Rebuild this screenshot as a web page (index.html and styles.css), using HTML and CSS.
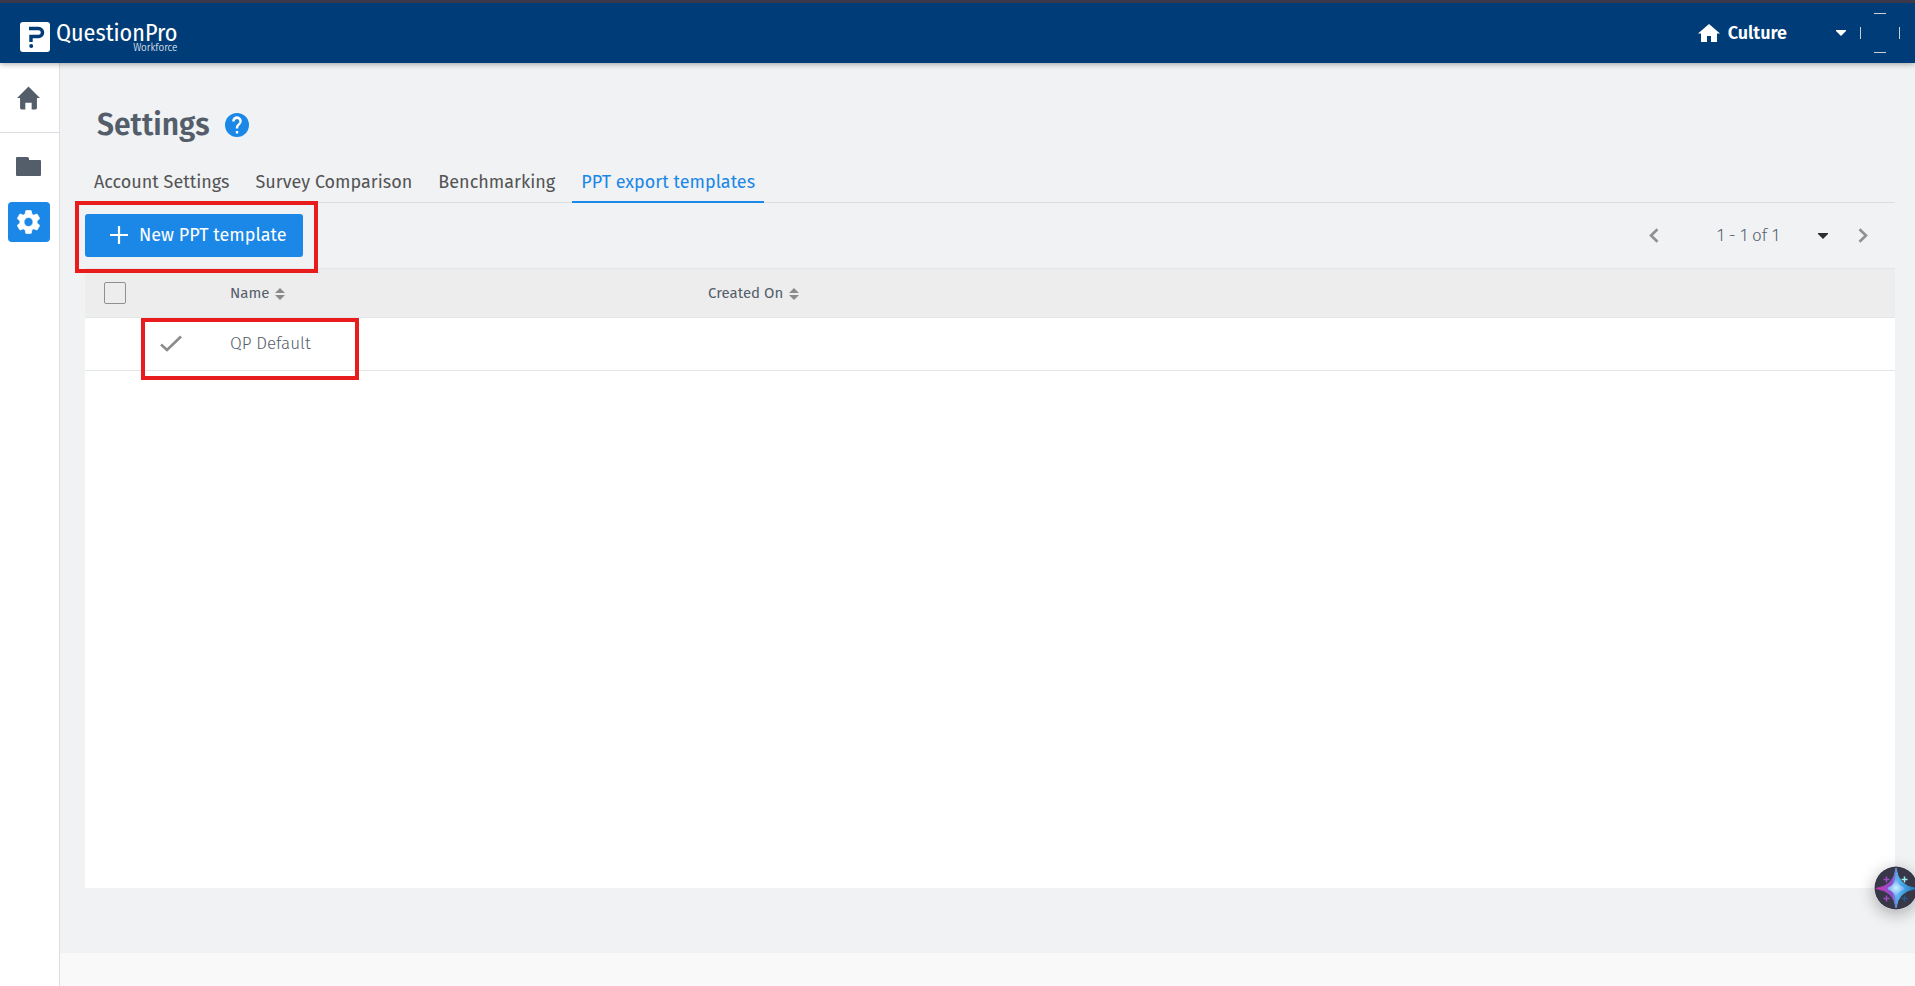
FILE: index.html
```html
<!DOCTYPE html>
<html lang="en">
<head>
<meta charset="utf-8">
<title>Settings - QuestionPro Workforce</title>
<link rel="stylesheet" href="styles.css">
</head>
<body>
<header class="topbar">
  <a class="brand" href="#" aria-label="QuestionPro Workforce">
    <svg class="brand-mark" viewBox="0 0 30 30" aria-hidden="true">
      <rect width="30" height="30" rx="3" fill="#fff"/>
      <path d="M9 6.500h9.500a3.800 3.800 0 0 1 0 8H11V20" fill="none" stroke="#003c78" stroke-width="3.400"/>
      <circle cx="11.200" cy="24" r="2" fill="#003c78"/>
    </svg>
    <span class="brand-text">
      <span class="brand-name">QuestionPro</span>
      <span class="brand-sub">Workforce</span>
    </span>
  </a>
  <nav class="account">
    <a class="product" href="#">
      <svg class="product-icon" viewBox="0 0 22 18" aria-hidden="true"><path d="M11 0L0 9.500h3V18h6v-6h4v6h6V9.500h3z" fill="#fff"/></svg>
      Culture
    </a>
    <button class="account-menu" type="button" aria-label="Account menu">
      <svg class="caret" viewBox="0 0 10 6" aria-hidden="true"><path d="M0 0h10v1L5 6 0 1z" fill="currentColor"/></svg>
      <svg class="avatar" viewBox="0 0 40 40" aria-hidden="true"><path d="M14 .5h12M14 39.500h12M.5 14v12M39.500 14v12" stroke="#c9d0d0" stroke-width="1"/></svg>
    </button>
  </nav>
</header>
<div class="shell">
  <nav class="sidebar" aria-label="Main">
    <a class="side-home" href="#" aria-label="Home">
      <svg class="side-icon" viewBox="0 0 24 24" aria-hidden="true"><path d="M12 0L0 12h3.200v10.500q0 1.500 1.500 1.500h4v-7h6.600v7h4q1.500 0 1.500-1.500V12H24z" fill="currentColor"/></svg>
    </a>
    <a class="side-link" href="#" aria-label="Folders">
      <svg class="side-folder" viewBox="0 0 25 19" aria-hidden="true"><path d="M1 0h10.500l1.500 1v2h11q1 0 1 1v14q0 1-1 1H1q-1 0-1-1V1q0-1 1-1z" fill="currentColor"/></svg>
    </a>
    <a class="side-link side-active" href="#" aria-label="Settings" aria-current="page">
      <svg class="side-icon" viewBox="2 2 20 20" aria-hidden="true"><path d="M19.430 12.980c.04-.32.07-.64.07-.98s-.03-.66-.07-.98l2.110-1.650c.19-.15.24-.42.12-.64l-2-3.460c-.12-.22-.39-.3-.61-.22l-2.490 1c-.52-.4-1.080-.73-1.690-.98l-.38-2.650A.488.488 0 0 0 14 2h-4c-.25 0-.46.18-.49.42l-.38 2.650c-.61.25-1.170.59-1.690.98l-2.490-1c-.23-.09-.49 0-.61.22l-2 3.460c-.13.22-.07.49.12.64l2.110 1.650c-.04.32-.07.65-.07.98s.03.66.07.98l-2.110 1.650c-.19.15-.24.42-.12.64l2 3.460c.12.22.39.3.61.22l2.490-1c.52.4 1.080.73 1.690.98l.38 2.650c.03.24.24.42.49.42h4c.25 0 .46-.18.49-.42l.38-2.650c.61-.25 1.170-.59 1.690-.98l2.490 1c.23.09.49 0 .61-.22l2-3.460c.12-.22.07-.49-.12-.64zM12 15.900a3.900 3.900 0 1 1 0-7.800 3.900 3.900 0 0 1 0 7.800z" fill="currentColor" stroke="currentColor" stroke-width=".6"/></svg>
    </a>
  </nav>
  <div class="content">
    <main class="page">
      <div class="heading">
        <h1 class="title">Settings</h1>
        <a class="help" href="#" aria-label="Help">
          <svg class="help-icon" viewBox="2 2 20 20" aria-hidden="true"><circle cx="12" cy="12" r="10" fill="#1b87e6"/><path d="M13 19h-2v-2h2zm2.070-7.750l-.9.920C13.450 12.900 13 13.500 13 15h-2v-.5c0-1.100.45-2.100 1.170-2.830l1.240-1.260A2 2 0 1 0 10 9H8a4 4 0 1 1 7.070 2.250z" fill="#fff"/></svg>
        </a>
      </div>
      <nav class="tabs" aria-label="Settings sections">
        <a class="tab" href="#">Account Settings</a>
        <a class="tab" href="#">Survey Comparison</a>
        <a class="tab" href="#">Benchmarking</a>
        <a class="tab tab-active" href="#" aria-current="page">PPT export templates</a>
      </nav>
      <div class="toolbar">
        <button class="new-button" type="button">
          <svg class="plus" viewBox="0 0 18 18" aria-hidden="true"><path d="M9 0v18M0 9h18" stroke="#fff" stroke-width="2.200"/></svg>
          New PPT template
        </button>
        <span class="mark mark-button"></span>
        <div class="pager">
          <button class="pager-button" type="button" aria-label="Previous page"><svg class="chevron" viewBox="0 0 10 15" aria-hidden="true"><path d="M8.500 1.200L2 7.500l6.500 6.300" fill="none" stroke="#8e9092" stroke-width="2.600"/></svg></button>
          <button class="pager-range" type="button">1 - 1 of 1 <svg class="caret" viewBox="0 0 10 6" aria-hidden="true"><path d="M0 0h10v1L5 6 0 1z" fill="currentColor"/></svg></button>
          <button class="pager-button" type="button" aria-label="Next page"><svg class="chevron" viewBox="0 0 10 15" aria-hidden="true"><path d="M1.500 1.200L8 7.500l-6.500 6.300" fill="none" stroke="#8e9092" stroke-width="2.600"/></svg></button>
        </div>
      </div>
      <section class="card">
        <table class="templates">
          <thead>
            <tr>
              <th class="col-check"><input class="checkbox" type="checkbox" aria-label="Select all"></th>
              <th class="col-state"></th>
              <th class="col-name">Name <svg class="sort" viewBox="0 0 10 12" aria-hidden="true"><path d="M5 0l5 5H0zM5 12L0 7h10z" fill="#8b8b8b"/></svg></th>
              <th>Created On <svg class="sort" viewBox="0 0 10 12" aria-hidden="true"><path d="M5 0l5 5H0zM5 12L0 7h10z" fill="#8b8b8b"/></svg></th>
            </tr>
          </thead>
          <tbody>
            <tr>
              <td></td>
              <td class="col-state"><svg class="tick" viewBox="0 0 22 17" aria-label="Default"><path d="M1 9.500l6 5.500L21 1.500" fill="none" stroke="#8b8b8b" stroke-width="2.600"/></svg></td>
              <td class="col-name">QP Default</td>
              <td></td>
            </tr>
          </tbody>
        </table>
        <span class="mark mark-row"></span>
      </section>
    </main>
    <footer class="footer"></footer>
  </div>
</div>
<button class="assistant" type="button" aria-label="AI assistant">
  <svg class="assistant-icon" viewBox="0 0 44 44" aria-hidden="true">
    <defs>
      <linearGradient id="star" x1="0" x2="1" y1="0" y2="0"><stop offset="0" stop-color="#cf36b5"/><stop offset=".4" stop-color="#8a50cc"/><stop offset=".55" stop-color="#52b9ee"/><stop offset="1" stop-color="#2075c0"/></linearGradient>
      <radialGradient id="core"><stop offset="0" stop-color="#c6f5ff"/><stop offset="1" stop-color="#78a8f4"/></radialGradient>
    </defs>
    <circle cx="22" cy="22" r="21.500" fill="#373748"/>
    <path d="M22 2Q24 20 42 22.500Q24 25 22 42Q20 25 2 22.500Q20 20 22 2z" fill="url(#star)" stroke="url(#star)" stroke-width="1"/>
    <path d="M22 14Q24 21 30 22.500Q24 24 22 30Q20 24 14 22.500Q20 21 22 14z" fill="url(#core)" stroke="url(#core)" stroke-width="2"/>
    <path d="M12.500 10.500v6M9.500 13.500h6M12.500 29.500v6M9.500 32.500h6" stroke="#a04cc4" stroke-width="1.500"/>
    <path d="M30.500 10.500v6M27.500 13.500h6" stroke="#9cecf0" stroke-width="1.500"/>
    <path d="M30.500 29.500v6M27.500 32.500h6" stroke="#275a8b" stroke-width="1.500"/>
  </svg>
</button>
</body>
</html>
```
FILE: styles.css
```css
* {
  box-sizing: border-box;
}

body {
  margin: 0;
  min-height: 100vh;
  display: flex;
  flex-direction: column;
  overflow-x: hidden;
  background: #f9f9f9;
  color: #545e6b;
  font-family: "Fira Sans", "Noto Sans", "Open Sans", sans-serif;
  font-size: 16px;
}

a {
  color: inherit;
  text-decoration: none;
}

button {
  padding: 0;
  border: 0;
  background: none;
  color: inherit;
  font: inherit;
  cursor: pointer;
}

svg {
  display: block;
}

.topbar {
  position: relative;
  z-index: 2;
  display: flex;
  justify-content: space-between;
  height: 63px;
  padding: 0 15px 0 20px;
  border-top: 3px solid #3d394b;
  background: #003c78;
  color: #fff;
  box-shadow: 0 1px 6px rgba(0, 0, 0, 0.35);
}

.brand {
  display: flex;
  align-items: flex-start;
  gap: 6px;
  padding-top: 19px;
}

.brand-mark {
  width: 30px;
  height: 30px;
}

.brand-text {
  display: flex;
  flex-direction: column;
  align-items: flex-end;
  font-family: "Fira Sans Condensed", "Fira Sans", Roboto, sans-serif;
}

.brand-name {
  font-size: 24px;
  font-weight: 400;
  line-height: 22px;
}

.brand-sub {
  font-size: 11px;
  line-height: 8px;
  font-weight: 300;
}

.account {
  display: flex;
  align-items: center;
  gap: 49px;
}

.product {
  display: flex;
  align-items: center;
  gap: 8px;
  font-size: 18px;
  font-weight: 600;
}

.product-icon {
  width: 22px;
  height: 18px;
}

.account-menu {
  display: flex;
  align-items: center;
  gap: 14px;
}

.caret {
  width: 10px;
  height: 6px;
}

.avatar {
  width: 40px;
  height: 40px;
}

.shell {
  flex: 1;
  display: flex;
}

.sidebar {
  display: flex;
  flex-direction: column;
  align-items: center;
  gap: 4px;
  width: 60px;
  border-right: 1px solid #dcdee1;
  background: #fff;
  color: #545e6b;
}

.side-home {
  display: flex;
  align-items: center;
  justify-content: center;
  align-self: stretch;
  height: 70px;
  padding-right: 2px;
  margin-bottom: 9px;
  border-bottom: 1px solid #dcdee1;
}

.side-link {
  display: flex;
  align-items: center;
  justify-content: center;
  width: 42px;
  height: 40px;
  margin: 0 2px 12px 0;
  border-radius: 4px;
}

.side-active {
  background: #1b87e6;
  color: #fff;
}

.side-icon {
  width: 23px;
  height: 24px;
}

.side-folder {
  width: 25px;
  height: 19px;
}

.content {
  flex: 1;
  display: flex;
  flex-direction: column;
  min-width: 0;
}

.page {
  flex: 1;
  display: flex;
  flex-direction: column;
  padding: 40px 20px 65px 25px;
  background: #f0f2f4;
}

.heading {
  display: flex;
  align-items: center;
  gap: 15px;
  height: 44px;
  padding-left: 12px;
}

.title {
  margin: 0;
  font-size: 30px;
  font-weight: 600;
}

.help-icon {
  width: 24px;
  height: 24px;
}

.tabs {
  display: flex;
  gap: 8px;
  height: 56px;
  padding-top: 18px;
  border-bottom: 1px solid #dcdee1;
}

.tab {
  height: 38px;
  padding: 0 9px;
  color: #545454;
  font-size: 18px;
  line-height: 34px;
}

.tab-active {
  border-bottom: 2px solid #1b87e6;
  color: #1b87e6;
}

.toolbar {
  position: relative;
  display: flex;
  align-items: flex-start;
  justify-content: space-between;
  height: 65px;
  padding-top: 11px;
}

.new-button {
  display: flex;
  align-items: center;
  gap: 11px;
  height: 43px;
  padding: 0 16px 2px 25px;
  border-radius: 3px;
  background: #1b87e6;
  color: #fff;
  font-size: 18px;
  font-weight: 400;
}

.plus {
  width: 18px;
  height: 18px;
}

.mark {
  position: absolute;
  border: 4px solid #e81c1c;
  pointer-events: none;
}

.mark-button {
  top: -2px;
  left: -10px;
  width: 243px;
  height: 72px;
  z-index: 1;
}

.mark-row {
  top: 50px;
  left: 56px;
  width: 218px;
  height: 62px;
}

.pager {
  display: flex;
  align-items: center;
  height: 43px;
  padding-right: 27px;
}

.pager-range {
  display: flex;
  align-items: center;
  gap: 39px;
  margin: 0 30px 0 58px;
  font-size: 17px;
  font-weight: 300;
}

.pager-range .caret {
  color: #2b2d2f;
}

.chevron {
  width: 10px;
  height: 15px;
}

.card {
  position: relative;
  flex: 1;
  background: #fff;
}

.templates {
  width: 100%;
  border-collapse: collapse;
  table-layout: fixed;
}

.templates th {
  height: 49px;
  padding: 0;
  border-top: 1px solid #e3e5e8;
  border-bottom: 1px solid #e3e5e8;
  background: #ededed;
  font-size: 15px;
  font-weight: 400;
  text-align: left;
}

.templates td {
  height: 53px;
  padding: 0 0 2px;
  border-bottom: 1px solid #e3e5e8;
  font-size: 17px;
  font-weight: 300;
}

.col-check {
  width: 75px;
}

.col-state {
  width: 70px;
}

.col-name {
  width: 478px;
}

.checkbox {
  display: block;
  appearance: none;
  width: 22px;
  height: 22px;
  margin: 0 0 0 19px;
  border: 1px solid #8e9092;
  border-radius: 2px;
}

.sort {
  display: inline-block;
  width: 10px;
  height: 12px;
  margin-left: 2px;
  vertical-align: -2px;
}

.tick {
  width: 22px;
  height: 17px;
}

.footer {
  height: 33px;
}

.assistant {
  position: fixed;
  right: -3px;
  bottom: 76px;
  border-radius: 50%;
  box-shadow: 0 4px 16px rgba(0, 0, 0, 0.3);
}

.assistant-icon {
  width: 44px;
  height: 44px;
}
```
